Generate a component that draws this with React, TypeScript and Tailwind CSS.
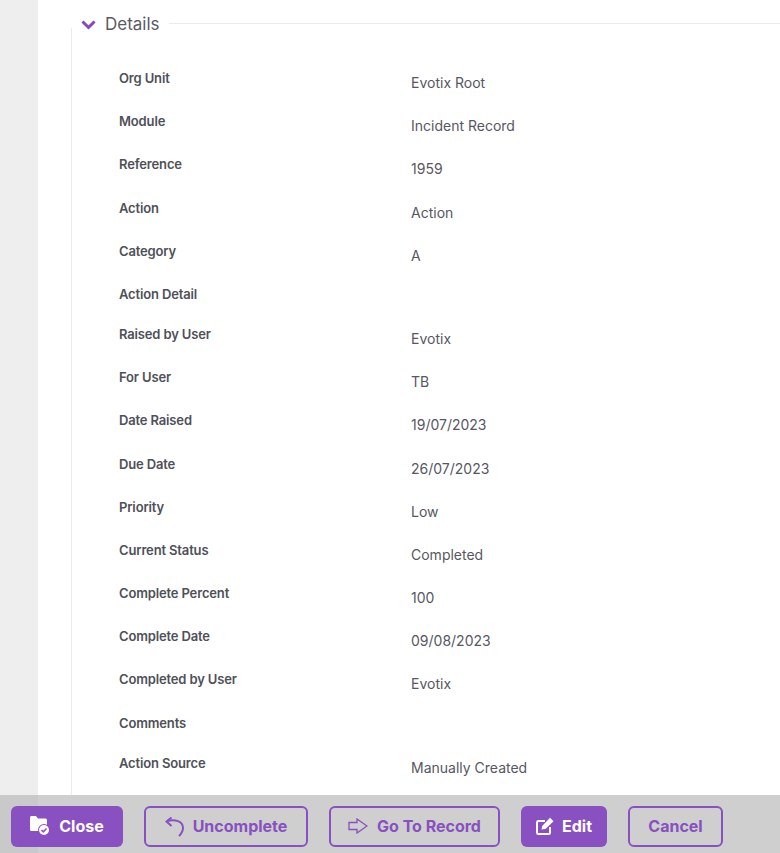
const rows: [string, string][] = [
  ["Org Unit", "Evotix Root"],
  ["Module", "Incident Record"],
  ["Reference", "1959"],
  ["Action", "Action"],
  ["Category", "A"],
  ["Action Detail", ""],
  ["Raised by User", "Evotix"],
  ["For User", "TB"],
  ["Date Raised", "19/07/2023"],
  ["Due Date", "26/07/2023"],
  ["Priority", "Low"],
  ["Current Status", "Completed"],
  ["Complete Percent", "100"],
  ["Complete Date", "09/08/2023"],
  ["Completed by User", "Evotix"],
  ["Comments", ""],
  ["Action Source", "Manually Created"],
];

function FolderCheck() {
  return (
    <svg width="20" height="20" viewBox="0 0 20 20">
      <path d="M0 1.500C0 .7.7 0 1.500 0H6l2 2.500h7.500c.8 0 1.500.7 1.500 1.500v9.500c0 .8-.7 1.500-1.500 1.500H1.500C.7 15 0 14.300 0 13.500z" fill="#fff" />
      <circle cx="14" cy="14" r="6" fill="#8850c0" />
      <circle cx="14" cy="14" r="5" fill="#fff" />
      <path d="M11.500 14l1.800 1.800 3.200-3.400" fill="none" stroke="#8850c0" strokeWidth="1.500" />
    </svg>
  );
}

function UndoIcon() {
  return (
    <svg width="19" height="21" viewBox="0 0 19 21" fill="none" stroke="#8850c0" strokeWidth="2">
      <path d="M2 5C10 3 18 5 18 12c0 3-2 6-4 8" />
      <path d="M6.500 1.500 1.500 5.500 6.500 10" />
    </svg>
  );
}

function ArrowIcon() {
  return (
    <svg width="20" height="16" viewBox="0 0 20 16" fill="none" stroke="#8850c0" strokeWidth="1.300">
      <path d="M1 4.500h8V1l10 7-10 7v-3.500H1z" />
    </svg>
  );
}

function EditIcon() {
  return (
    <svg width="18" height="18" viewBox="0 0 18 18" fill="none">
      <path d="M9 4H2.500C1.700 4 1 4.700 1 5.500v10c0 .8.700 1.500 1.500 1.500h10c.8 0 1.500-.7 1.500-1.500V10" stroke="#fff" strokeWidth="2" />
      <path d="M5.500 12.500l.7-3.500L14 .8 17.500 4.200l-8 7.700z" fill="#fff" />
    </svg>
  );
}

export default function App() {
  return (
    <div className="flex h-[853px] w-[780px] flex-col overflow-hidden bg-white font-['Inter',sans-serif]">
      <div className="flex min-h-0 flex-1">
        <div className="w-[38px] shrink-0 bg-[#eeeeee]" />
        <div className="flex min-w-0 flex-1 flex-col pl-[33px]">
          <div className="flex h-[36px] shrink-0 items-center pt-[12px]">
            <svg className="ml-[10px] mt-[2px]" width="15" height="10" viewBox="0 0 15 10">
              <path d="M1.500 1.500 7.500 7.500 13.500 1.500" fill="none" stroke="#8446c4" strokeWidth="3" />
            </svg>
            <span className="ml-[9px] text-[17px] leading-[24px] text-[#5a5a66]">Details</span>
            <div className="mb-[2px] ml-[9px] h-px flex-1 bg-[#ebebeb]" />
          </div>
          <div className="-mt-[8px] flex-1 border-l border-[#ebebeb] pl-[47px] pt-[40px]">
            {rows.map(([label, value]) => (
              <div key={label} className="flex min-h-[40px]">
                <div className="w-[292px] shrink-0 text-[13px] font-semibold leading-[20px] tracking-[-0.15px] text-[#4f5058]">{label}</div>
                {value && <div className="pb-[18.190px] pt-[5px] text-[14px] leading-[20px] text-[#57575f]">{value}</div>}
              </div>
            ))}
          </div>
        </div>
      </div>
      <div className="flex h-[58px] shrink-0 items-center gap-[21px] bg-[linear-gradient(to_right,#c9c9c9_38px,#cfcfcf_38px)] pl-[11px] pt-[4px] text-[16px] font-bold">
        <button className="flex h-[41px] w-[112px] items-center justify-center gap-[9px] rounded-[6px] bg-[#8850c0] text-white">
          <FolderCheck />
          Close
        </button>
        <button className="flex h-[41px] w-[164px] items-center justify-center gap-[9px] rounded-[6px] border-2 border-[#8850c0] text-[#8850c0]">
          <UndoIcon />
          Uncomplete
        </button>
        <button className="flex h-[41px] w-[171px] items-center justify-center gap-[9px] rounded-[6px] border-2 border-[#8850c0] text-[#8850c0]">
          <ArrowIcon />
          Go To Record
        </button>
        <button className="flex h-[41px] w-[86px] items-center justify-center gap-[8px] rounded-[6px] bg-[#8850c0] text-white">
          <EditIcon />
          Edit
        </button>
        <button className="flex h-[41px] w-[95px] items-center justify-center rounded-[6px] border-2 border-[#8850c0] text-[#8850c0]">
          Cancel
        </button>
      </div>
    </div>
  );
}
